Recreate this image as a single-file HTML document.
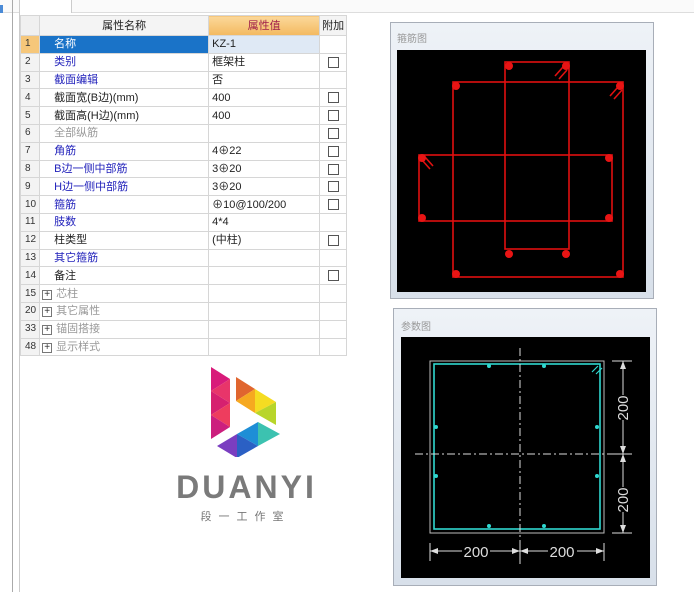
<!DOCTYPE html>
<html><head><meta charset="utf-8"><style>
*{margin:0;padding:0;box-sizing:border-box}
body{width:694px;height:595px;background:#fff;position:relative;overflow:hidden;font-family:"Liberation Sans","Noto Sans CJK SC",sans-serif;font-size:11px;color:#222}
.a{position:absolute}
table{position:absolute;left:20px;top:15px;border-collapse:collapse;table-layout:fixed}
td{border:1px solid #d6d6d6;height:17.8px;padding:0 3px;white-space:nowrap;overflow:hidden;font-size:11px;line-height:16px}
td.n{background:#f3f3f3;color:#333;font-size:10px;padding-left:4px}
td.b{color:#2222bb}
td.g{color:#999}
.cb{display:inline-block;width:11px;height:11px;border:1px solid #555;background:#fff;vertical-align:middle}
.pl{display:inline-block;width:10px;height:10px;border:1px solid #777;font-size:10px;line-height:8px;text-align:center;margin-right:4px;color:#333}
</style></head><body>
<div class="a" style="left:0;top:0;width:694px;height:13px;background:#fafafa;border-bottom:1px solid #ddd"></div>
<div class="a" style="left:0;top:5px;width:3px;height:8px;background:#4a8ad6"></div>
<div class="a" style="left:12px;top:0;width:1px;height:592px;background:#aaa"></div>
<div class="a" style="left:19px;top:0;width:1px;height:592px;background:#ccc"></div>
<div class="a" style="left:20px;top:0;width:52px;height:13px;border-right:1px solid #ccc;background:#fff"></div>
<table>
<colgroup><col style="width:18px"><col style="width:169px"><col style="width:111px"><col style="width:27px"></colgroup>
<tr style="height:20px"><td style="background:#f0f0f0"></td><td style="text-align:center;background:#f4f4f4">属性名称</td><td style="text-align:center;background:linear-gradient(#fbd89a,#f3b960);color:#a0204a">属性值</td><td style="text-align:center;background:#f4f4f4;padding:0">附加</td></tr>
<tr><td class="n" style="background:#f6c77a">1</td><td style="background:#1a73c8;color:#fff;padding-left:14px">名称</td><td style="background:#dfe9f5">KZ-1</td><td></td></tr>
<tr><td class="n">2</td><td class="b" style="padding-left:14px">类别</td><td>框架柱</td><td style="text-align:center"><span class="cb"></span></td></tr>
<tr><td class="n">3</td><td class="b" style="padding-left:14px">截面编辑</td><td>否</td><td></td></tr>
<tr><td class="n">4</td><td style="padding-left:14px">截面宽(B边)(mm)</td><td>400</td><td style="text-align:center"><span class="cb"></span></td></tr>
<tr><td class="n">5</td><td style="padding-left:14px">截面高(H边)(mm)</td><td>400</td><td style="text-align:center"><span class="cb"></span></td></tr>
<tr><td class="n">6</td><td class="g" style="padding-left:14px">全部纵筋</td><td></td><td style="text-align:center"><span class="cb"></span></td></tr>
<tr><td class="n">7</td><td class="b" style="padding-left:14px">角筋</td><td>4⊕22</td><td style="text-align:center"><span class="cb"></span></td></tr>
<tr><td class="n">8</td><td class="b" style="padding-left:14px">B边一侧中部筋</td><td>3⊕20</td><td style="text-align:center"><span class="cb"></span></td></tr>
<tr><td class="n">9</td><td class="b" style="padding-left:14px">H边一侧中部筋</td><td>3⊕20</td><td style="text-align:center"><span class="cb"></span></td></tr>
<tr><td class="n">10</td><td class="b" style="padding-left:14px">箍筋</td><td>⊕10@100/200</td><td style="text-align:center"><span class="cb"></span></td></tr>
<tr><td class="n">11</td><td class="b" style="padding-left:14px">肢数</td><td>4*4</td><td></td></tr>
<tr><td class="n">12</td><td style="padding-left:14px">柱类型</td><td>(中柱)</td><td style="text-align:center"><span class="cb"></span></td></tr>
<tr><td class="n">13</td><td class="b" style="padding-left:14px">其它箍筋</td><td></td><td></td></tr>
<tr><td class="n">14</td><td style="padding-left:14px">备注</td><td></td><td style="text-align:center"><span class="cb"></span></td></tr>
<tr><td class="n">15</td><td class="g" style="padding-left:2px"><span class="pl">+</span>芯柱</td><td></td><td></td></tr>
<tr><td class="n">20</td><td class="g" style="padding-left:2px"><span class="pl">+</span>其它属性</td><td></td><td></td></tr>
<tr><td class="n">33</td><td class="g" style="padding-left:2px"><span class="pl">+</span>锚固搭接</td><td></td><td></td></tr>
<tr><td class="n">48</td><td class="g" style="padding-left:2px"><span class="pl">+</span>显示样式</td><td></td><td></td></tr>
</table>

<svg class="a" style="left:205px;top:362px" width="80" height="95" viewBox="0 0 80 95">
<polygon points="6,5 25,17 6,29" fill="#d81b7a"/>
<polygon points="6,29 25,17 25,41" fill="#e8356a"/>
<polygon points="6,29 25,41 6,53" fill="#d6206f"/>
<polygon points="6,53 25,41 25,65" fill="#ee3d5e"/>
<polygon points="6,53 25,65 6,77" fill="#cc1f7e"/>
<polygon points="31,15 50,27 31,39" fill="#e0662f"/>
<polygon points="31,39 50,27 50,51" fill="#f6a920"/>
<polygon points="50,27 71,40 50,51" fill="#f5dc22"/>
<polygon points="50,51 71,40 71,63" fill="#b8d52a"/>
<polygon points="12,84 32,72 32,96" fill="#7a3ec0"/>
<polygon points="32,72 53,60 53,84" fill="#1e8ed6"/>
<polygon points="32,72 53,84 32,96" fill="#2b60c4"/>
<polygon points="53,60 75,72 53,84" fill="#3cc2b0"/>
</svg>
<div class="a" style="left:160px;top:470px;width:170px;text-align:center;font-size:32px;font-weight:bold;color:#7a7a7a;letter-spacing:3px;padding-left:3px;line-height:34px">DUANYI</div>
<div class="a" style="left:168px;top:508px;width:148px;text-align:center;font-size:11px;color:#777;letter-spacing:7px;padding-left:7px">段一工作室</div>

<div class="a" style="left:390px;top:22px;width:264px;height:277px;border:1px solid #a8aeb8;background:linear-gradient(#eef2f7,#d8e0ea)"></div>
<div class="a" style="left:397px;top:30px;font-size:10px;color:#999">箍筋图</div>
<svg class="a" style="left:397px;top:50px" width="249" height="242" viewBox="397 50 249 242">
<rect x="397" y="50" width="249" height="242" fill="#000"/>
<g stroke="#e01010" stroke-width="1.6" fill="none">
<rect x="453" y="82" width="170" height="195"/>
<rect x="505" y="62" width="64" height="187"/>
<rect x="419" y="155" width="193" height="66"/>
<path d="M563,67 l-8,9 M567,70 l-8,9 M618,87 l-8,9 M622,90 l-8,9 M422,160 l8,9 M425,157 l8,9"/>
</g>
<g fill="#e81414">
<circle cx="456" cy="86" r="4"/><circle cx="620" cy="86" r="4"/><circle cx="456" cy="274" r="4"/><circle cx="620" cy="274" r="4"/>
<circle cx="509" cy="66" r="4"/><circle cx="566" cy="66" r="4"/><circle cx="509" cy="254" r="4"/><circle cx="566" cy="254" r="4"/>
<circle cx="422" cy="158" r="4"/><circle cx="609" cy="158" r="4"/><circle cx="422" cy="218" r="4"/><circle cx="609" cy="218" r="4"/>
</g>
</svg>

<div class="a" style="left:393px;top:308px;width:264px;height:278px;border:1px solid #a8aeb8;background:linear-gradient(#eef2f7,#d8e0ea)"></div>
<div class="a" style="left:401px;top:318px;font-size:10px;color:#999">参数图</div>
<svg class="a" style="left:401px;top:337px" width="249" height="241" viewBox="401 337 249 241" font-family="Liberation Sans, sans-serif">
<rect x="401" y="337" width="249" height="241" fill="#000"/>
<rect x="430" y="361" width="174" height="172" fill="none" stroke="#bbb" stroke-width="1"/>
<rect x="434" y="364" width="166" height="165" fill="none" stroke="#30d8d0" stroke-width="1.6"/>
<path d="M592,372 l6,-6 M596,374 l6,-6" stroke="#30d8d0" stroke-width="1.2"/>
<g fill="#30d8d0"><circle cx="489" cy="366" r="2"/><circle cx="544" cy="366" r="2"/><circle cx="489" cy="526" r="2"/><circle cx="544" cy="526" r="2"/><circle cx="436" cy="427" r="2"/><circle cx="436" cy="476" r="2"/><circle cx="597" cy="427" r="2"/><circle cx="597" cy="476" r="2"/></g>
<g stroke="#ddd" stroke-width="1" stroke-dasharray="8,3,2,3"><path d="M520,348 V566"/><path d="M415,454 H634"/></g>
<g stroke="#ddd" stroke-width="1" fill="none">
<path d="M612,361 H632 M612,454 H632 M612,533 H632 M623,361 V395 M623,420 V487 M623,512 V533"/>
<path d="M430,543 V561 M520,543 V561 M604,543 V561 M430,551 H462 M490,551 H520 M520,551 H548 M577,551 H604"/>
</g>
<g fill="#ddd"><path d="M623,361 l-3,8 h6z M623,454 l-3,-8 h6z M623,454 l-3,8 h6z M623,533 l-3,-8 h6z M430,551 l8,-3 v6z M520,551 l-8,-3 v6z M520,551 l8,-3 v6z M604,551 l-8,-3 v6z"/></g>
<g fill="#ddd" font-size="15"><text x="476" y="557" text-anchor="middle">200</text><text x="562" y="557" text-anchor="middle">200</text>
<text transform="translate(628,408) rotate(-90)" text-anchor="middle">200</text><text transform="translate(628,500) rotate(-90)" text-anchor="middle">200</text></g>
</svg>
</body></html>
